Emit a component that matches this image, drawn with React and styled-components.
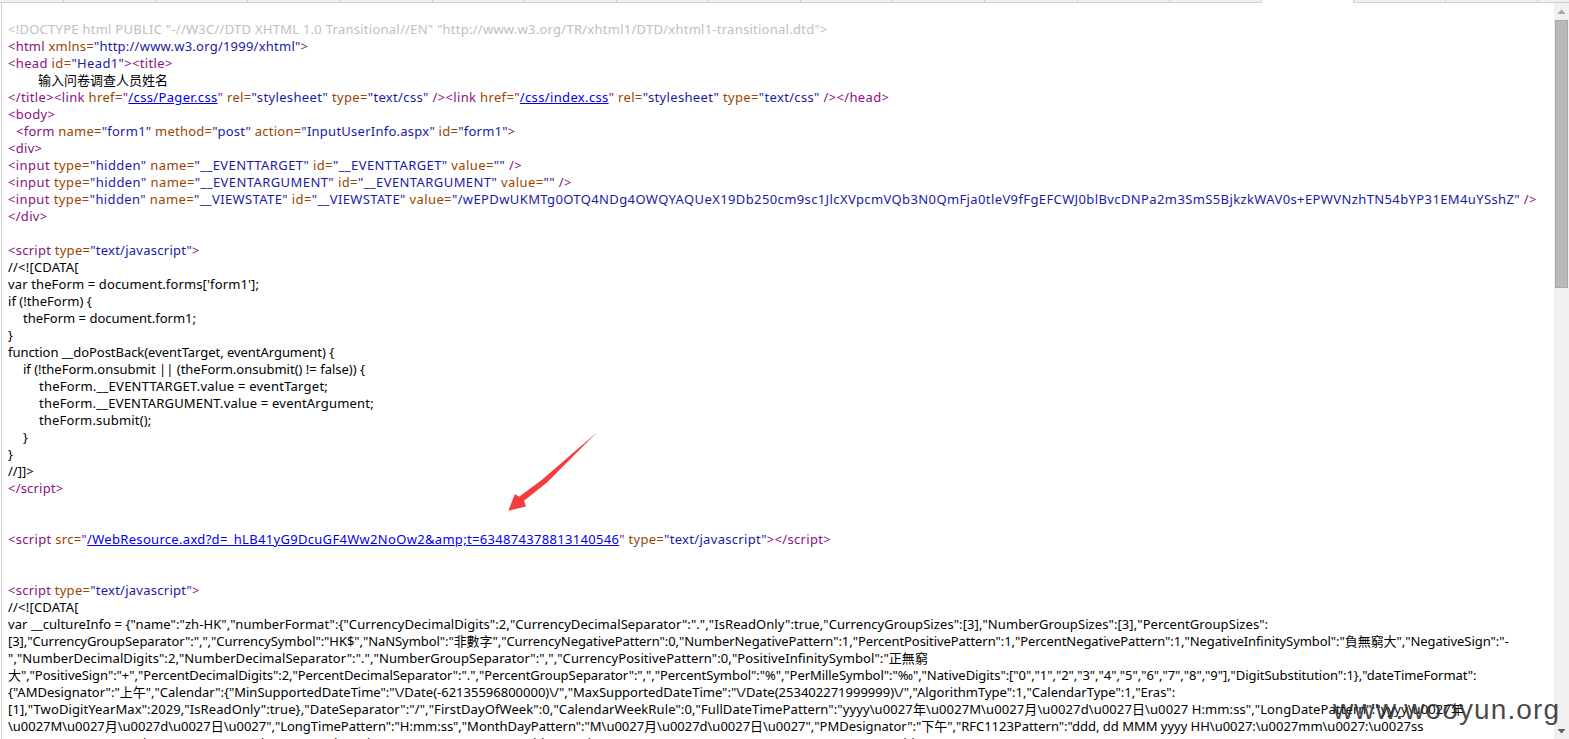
import React from "react";
import styled, { createGlobalStyle } from "styled-components";

const Global = createGlobalStyle`
  html, body { margin: 0; padding: 0; height: 739px; overflow: hidden; background: #fff; }
  #root { height: 739px; }
`;
const Page = styled.div`
  position: relative; display: flex; flex-direction: column; width: 1569px; height: 739px; overflow: hidden; background: #fff;
`;
const TabStrip = styled.div`
  display: flex; flex: none; height: 3px; background: #f0f0f0;
`;
const Tab = styled.div`
  flex: none; box-sizing: border-box; width: ${(p) => p.$w}px;
  border-right: 1px solid #d2d2d2;
  border-bottom: ${(p) => (p.$active ? "none" : "1px solid #d2d2d2")};
  background: ${(p) => (p.$active ? "#fff" : "transparent")};
`;
const Body = styled.div`
  flex: 1; min-height: 0; display: flex;
`;
const Source = styled.div`
  flex: 1; min-width: 0; overflow: hidden; box-sizing: border-box;
  margin-left: 1px; border-left: 1px solid #d2d2d2; padding: 18px 0 0 6px;
  font: 13px/17px "Noto Sans", "Noto Sans CJK SC", sans-serif; color: #000;
`;
const Line = styled.div`
  height: 17px; white-space: pre; padding-left: ${(p) => p.$indent || 0}px;
  letter-spacing: ${(p) => p.$track || 0}px;
`;
const Punct = styled.span` color: #881280; `;
const Attr = styled.span` color: #994500; `;
const Val = styled.span` color: #1a1aa6; `;
const Doctype = styled.span` color: #c0c0c0; `;
const SrcLink = styled.a` color: #0000ee; text-decoration: underline; `;
const Scrollbar = styled.div`
  flex: none; width: 15px; display: flex; flex-direction: column; align-items: center; background: #f0f0f0;
`;
const ArrowBtn = styled.div`
  flex: none; height: 17px; width: 100%; display: flex; align-items: center; justify-content: center;
`;
const Thumb = styled.div`
  flex: none; width: 13px; height: 268px; box-sizing: border-box; background: #b9b9b9; border: 1px solid #a8a8a8;
`;
const Track = styled.div` flex: 1; `;
const Arrow = styled.svg`
  position: absolute; left: 500px; top: 425px; width: 110px; height: 95px;
`;
const Watermark = styled.div`
  position: absolute; left: 1333px; top: 692px; font: 28px/36px "Liberation Sans", sans-serif; letter-spacing: 1.1px;
  color: rgba(40, 40, 40, 0.85); white-space: nowrap;
`;

const tagRe = /(<\/?[\w!]+|\/?>)|([\w:]+=)|("[^"]*")/g;
function Markup({ text }) {
  const out = [];
  let last = 0;
  let isLink = false;
  let k = 0;
  for (const m of text.matchAll(tagRe)) {
    if (m.index > last) out.push(<Attr key={k++}>{text.slice(last, m.index)}</Attr>);
    if (m[1]) out.push(<Punct key={k++}>{m[1]}</Punct>);
    else if (m[2]) {
      isLink = m[2] === "href=" || m[2] === "src=";
      out.push(<Attr key={k++}>{m[2]}</Attr>);
    } else if (isLink) {
      isLink = false;
      out.push(<Punct key={k++}>"</Punct>);
      out.push(<SrcLink key={k++} href="#">{m[3].slice(1, -1)}</SrcLink>);
      out.push(<Punct key={k++}>"</Punct>);
    } else out.push(<Val key={k++}>{m[3]}</Val>);
    last = m.index + m[0].length;
  }
  if (last < text.length) out.push(<Attr key={k++}>{text.slice(last)}</Attr>);
  return out;
}

const D = "d";
const M = "m";
const lines = [
  [D, `<!DOCTYPE html PUBLIC "-//W3C//DTD XHTML 1.0 Transitional//EN" "http://www.w3.org/TR/xhtml1/DTD/xhtml1-transitional.dtd">`, 0, 0.258],
  [M, `<html xmlns="http://www.w3.org/1999/xhtml">`, 0, 0.233],
  [M, `<head id="Head1"><title>`, 0, 0.35],
  ["t", `输入问卷调查人员姓名`, 30],
  [M, `</title><link href="/css/Pager.css" rel="stylesheet" type="text/css" /><link href="/css/index.css" rel="stylesheet" type="text/css" /></head>`, 0, 0.35],
  [M, `<body>`, 0, 0.3],
  [M, `<form name="form1" method="post" action="InputUserInfo.aspx" id="form1">`, 8, 0.25],
  [M, `<div>`, 0, 0.3],
  [M, `<input type="hidden" name="__EVENTTARGET" id="__EVENTTARGET" value="" />`, 0, 0.41],
  [M, `<input type="hidden" name="__EVENTARGUMENT" id="__EVENTARGUMENT" value="" />`, 0, 0.42],
  [M, `<input type="hidden" name="__VIEWSTATE" id="__VIEWSTATE" value="/wEPDwUKMTg0OTQ4NDg4OWQYAQUeX19Db250cm9sc1JlcXVpcmVQb3N0QmFja0tleV9fFgEFCWJ0blBvcDNPa2m3SmS5BjkzkWAV0s+EPWVNzhTN54bYP31EM4uYSshZ" />`, 0, 0.387],
  [M, `</div>`, 0, 0.3],
  ["t", ``],
  [M, `<script type="text/javascript">`, 0, 0.26],
  ["t", `//<![CDATA[`, 0, 0.2],
  ["t", `var theForm = document.forms['form1'];`, 0, 0.13],
  ["t", `if (!theForm) {`, 0, 0.05],
  ["t", `theForm = document.form1;`, 15],
  ["t", `}`],
  ["t", `function __doPostBack(eventTarget, eventArgument) {`, 0, -0.04],
  ["t", `if (!theForm.onsubmit || (theForm.onsubmit() != false)) {`, 15],
  ["t", `theForm.__EVENTTARGET.value = eventTarget;`, 31, 0.24],
  ["t", `theForm.__EVENTARGUMENT.value = eventArgument;`, 31, 0.2],
  ["t", `theForm.submit();`, 31, 0.18],
  ["t", `}`, 15],
  ["t", `}`],
  ["t", `//]]>`],
  [M, `</script>`, 0, 0.2],
  ["t", ``],
  ["t", ``],
  [M, `<script src="/WebResource.axd?d=_hLB41yG9DcuGF4Ww2NoOw2&amp;t=634874378813140546" type="text/javascript"></script>`, 0, 0.31],
  ["t", ``],
  ["t", ``],
  [M, `<script type="text/javascript">`, 0, 0.26],
  ["t", `//<![CDATA[`, 0, 0.2],
  ["t", `var __cultureInfo = {"name":"zh-HK","numberFormat":{"CurrencyDecimalDigits":2,"CurrencyDecimalSeparator":".","IsReadOnly":true,"CurrencyGroupSizes":[3],"NumberGroupSizes":[3],"PercentGroupSizes":`, 0, 0.08],
  ["t", `[3],"CurrencyGroupSeparator":",","CurrencySymbol":"HK$","NaNSymbol":"非數字","CurrencyNegativePattern":0,"NumberNegativePattern":1,"PercentPositivePattern":1,"PercentNegativePattern":1,"NegativeInfinitySymbol":"負無窮大","NegativeSign":"-`, 0, -0.065],
  ["t", `","NumberDecimalDigits":2,"NumberDecimalSeparator":".","NumberGroupSeparator":",","CurrencyPositivePattern":0,"PositiveInfinitySymbol":"正無窮`, 0, 0.08],
  ["t", `大","PositiveSign":"+","PercentDecimalDigits":2,"PercentDecimalSeparator":".","PercentGroupSeparator":",","PercentSymbol":"%","PerMilleSymbol":"‰","NativeDigits":["0","1","2","3","4","5","6","7","8","9"],"DigitSubstitution":1},"dateTimeFormat":`, 0, -0.055],
  ["t", `{"AMDesignator":"上午","Calendar":{"MinSupportedDateTime":"\\/Date(-62135596800000)\\/","MaxSupportedDateTime":"\\/Date(253402271999999)\\/","AlgorithmType":1,"CalendarType":1,"Eras":`],
  ["t", `[1],"TwoDigitYearMax":2029,"IsReadOnly":true},"DateSeparator":"/","FirstDayOfWeek":0,"CalendarWeekRule":0,"FullDateTimePattern":"yyyy\\u0027年\\u0027M\\u0027月\\u0027d\\u0027日\\u0027 H:mm:ss","LongDatePattern":"yyyy\\u0027年`, 0, 0.1],
  ["t", `\\u0027M\\u0027月\\u0027d\\u0027日\\u0027","LongTimePattern":"H:mm:ss","MonthDayPattern":"M\\u0027月\\u0027d\\u0027日\\u0027","PMDesignator":"下午","RFC1123Pattern":"ddd, dd MMM yyyy HH\\u0027:\\u0027mm\\u0027:\\u0027ss`, 0, -0.02],
  ["t", `\\u0027GMT\\u0027","ShortDatePattern":"d/M/yyyy","ShortTimePattern":"H:mm","SortableDateTimePattern":"yyyy\\u0027-\\u0027MM\\u0027-\\u0027dd\\u0027T\\u0027HH`],
];

const tabWidths = [64, ...Array(13).fill(92.15)];

export default function App() {
  return (
    <Page>
      <Global />
      <TabStrip>
        {tabWidths.map((w, i) => <Tab key={i} $w={w} />)}
        <Tab $w={92} $active />
        <Tab $w={92} />
        <Tab $w={92} />
        <Tab $w={32} />
      </TabStrip>
      <Body>
        <Source>
          {lines.map(([kind, text, indent, track], i) => (
            <Line key={i} $indent={indent} $track={track}>
              {kind === "d" ? <Doctype>{text}</Doctype> : kind === "m" ? <Markup text={text} /> : text}
            </Line>
          ))}
        </Source>
        <Scrollbar>
          <ArrowBtn>
            <svg width="9" height="6" viewBox="0 0 9 6"><path d="M4.5 0.5 L8.5 5 H0.5 Z" fill="#a6a6a6" /></svg>
          </ArrowBtn>
          <Thumb />
          <Track />
          <ArrowBtn>
            <svg width="9" height="6" viewBox="0 0 9 6"><path d="M4.5 5.5 L8.5 1 H0.5 Z" fill="#606060" /></svg>
          </ArrowBtn>
        </Scrollbar>
      </Body>
      <Arrow viewBox="500 425 110 95">
        <polygon points="596.7,432.5 547,482.5 524,500.7 526,506.5 508.3,510.7 515,494 519,496.7 541.7,480" fill="#f43c3c" />
      </Arrow>
      <Watermark>www.wooyun.org</Watermark>
    </Page>
  );
}
